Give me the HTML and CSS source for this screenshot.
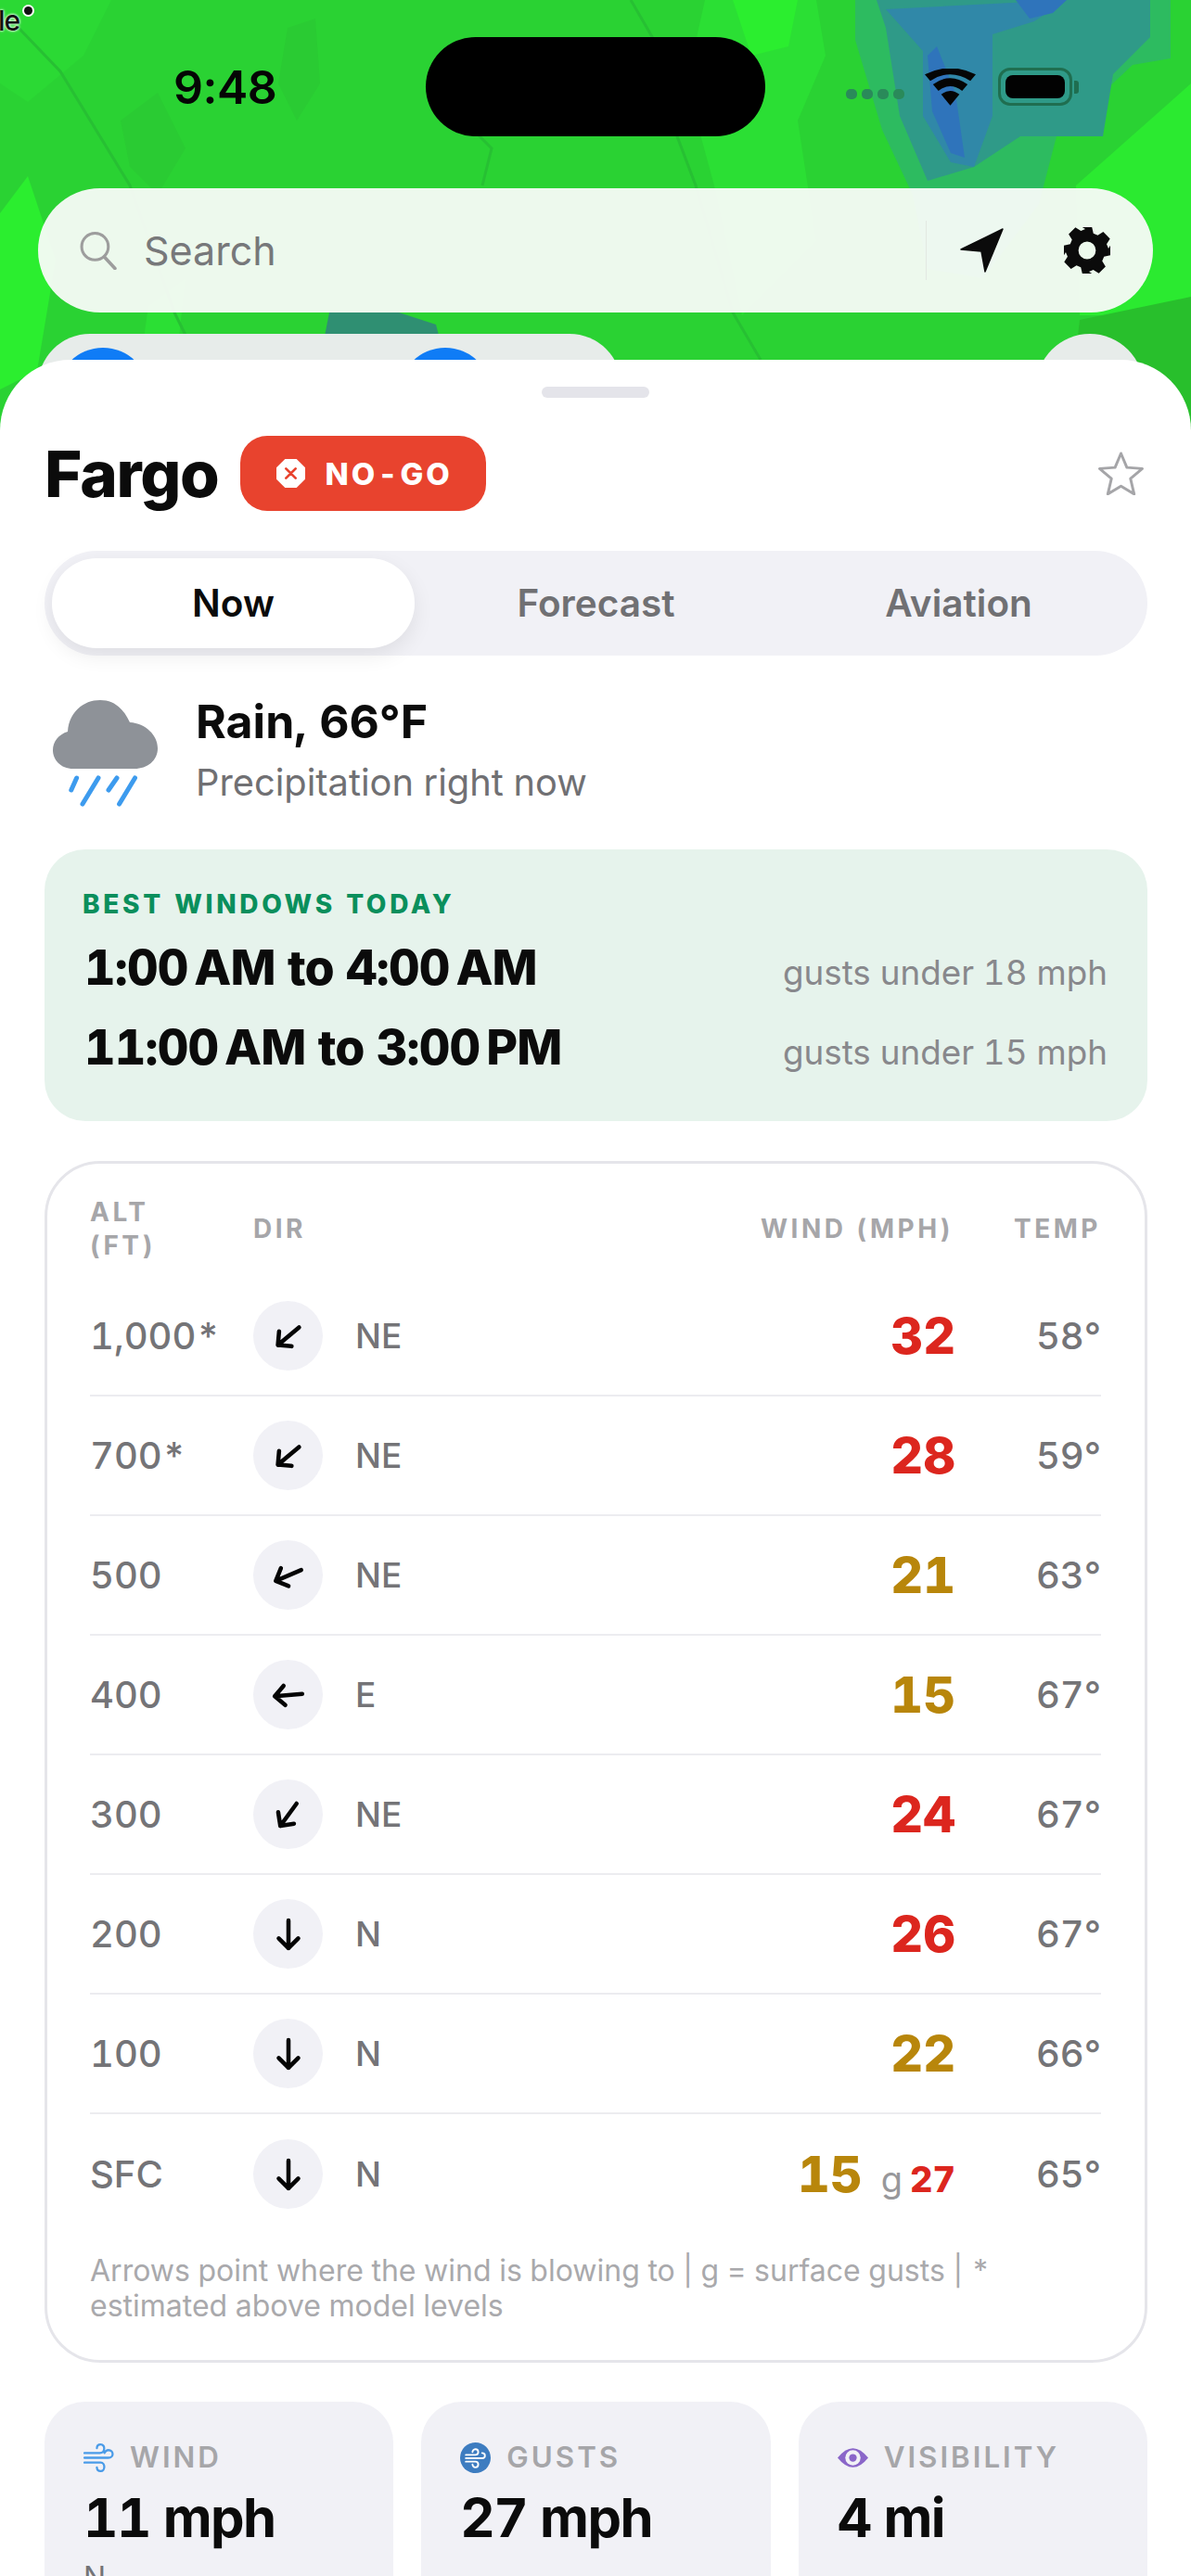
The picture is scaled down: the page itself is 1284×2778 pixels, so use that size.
FILE: index.html
```html
<!DOCTYPE html>
<html lang="en">
<head>
<meta charset="UTF-8"/>
<title>Fargo</title>
<link rel="stylesheet" href="styles.css">
</head>
<body>
<div class="map">
 <svg class="map-art" viewBox="0 0 1284 470">
  <rect width="1284" height="470" fill="#2ad233"/>
  <path d="M0 0H120L90 60 30 110 0 90Z" fill="#2bd934"/>
  <path d="M760 0H880L890 60 860 130 880 260 800 340 770 200 740 90Z" fill="#2bdf34"/>
  <path d="M790 0H860L850 50 810 60Z" fill="#2bee2f"/>
  <path d="M0 230L30 190 60 280 40 400 0 420Z" fill="#2bee2f"/>
  <path d="M130 130L170 100 200 160 170 210 140 180Z" fill="#2acb33"/>
  <path d="M310 30L340 20 345 90 320 130 300 90Z" fill="#2acb33"/>
  <path d="M160 330L200 300 190 390 150 400Z" fill="#2bdf34"/>
  <path d="M1160 200L1284 90V340H1164Z" fill="#2bea30"/>
  <path d="M1164 345L1284 320V470H1150Z" fill="#28bf2c"/>
  <path d="M922 0V43L951 140 984 210 1000 290 1060 300 1120 220 1139 147 1221 70 1262 63V0Z" fill="#2dbb60"/>
  <path d="M945 0L955 30 970 125 1000 195 1050 180 1100 147H1189L1200 80 1240 40V0Z" fill="#2f9a88"/>
  <path d="M955 10L995 55V125L1025 175 1050 180 1070 125V37L1115 23 1150 0Z" fill="#3088a8"/>
  <path d="M1000 60L1010 50 1030 100 1040 170 1025 165 1005 120Z" fill="#2f74bb"/>
  <path d="M1095 0H1150L1135 14 1110 20Z" fill="#2f74bb"/>
  <path d="M355 337L345 388H480L470 350 430 337Z" fill="#2f8f72"/>
  <g fill="none" stroke="#27c033" stroke-width="3">
   <path d="M20 30L65 77 140 200 188 337 213 388"/>
   <path d="M680 0L705 43 730 147 750 200 790 337 820 388"/>
   <path d="M490 120L530 160 520 200"/>
  </g>
 </svg>
 <span class="map-label">le<i class="map-dot"></i></span>

 <div class="status">
  <span class="clock">9:48</span>
  <div class="island"></div>
  <div class="status-right">
   <div class="signal"><i></i><i></i><i></i><i></i></div>
   <svg class="wifi" viewBox="0 0 56 40"><path d="M28 40L18 28Q28 20 38 28Z" fill="#050505"/><path d="M15 24L9 17Q28 3 47 17L41 24Q28 14 15 24Z" fill="#050505"/><path d="M6 13L0 6Q28 -8 56 6L50 13Q28 -1 6 13Z" fill="#050505"/></svg>
   <div class="battery"><div class="battery-fill"></div></div>
   <div class="battery-cap"></div>
  </div>
 </div>

 <div class="search">
  <svg class="search-icon" viewBox="0 0 40 40"><circle cx="17" cy="16" r="14" fill="none" stroke="#9d9d9d" stroke-width="3"/><path d="M27 27L38 39" stroke="#9d9d9d" stroke-width="3.5" stroke-linecap="round"/></svg>
  <span class="search-text">Search</span>
  <div class="search-div"></div>
  <svg class="locate" viewBox="0 0 48 48"><path d="M46 1L27 47 23 25 1 23Z" fill="#0b0b0b" stroke="#0b0b0b" stroke-width="1.5" stroke-linejoin="round"/></svg>
  <svg class="gear" viewBox="0 0 48 48"><path fill="#0b0b0b" fill-rule="evenodd" d="M19 0h10l1.500 6.500 4.500 1.900 5.700-3.500 7 7-3.500 5.700 1.900 4.500L48 19v10l-6.500 1.500-1.900 4.500 3.500 5.700-7 7-5.700-3.500-4.500 1.900L29 48H19l-1.500-6.500-4.500-1.900-5.700 3.500-7-7 3.500-5.700-1.900-4.500L0 29V19l6.500-1.500 1.900-4.500-3.500-5.700 7-7 5.700 3.500 4.500-1.900ZM24 15a9 9 0 1 0 0 18 9 9 0 0 0 0-18Z"/></svg>
 </div>

 <div class="chips">
  <div class="chip-wide"><i class="chip-dot"></i><i class="chip-dot"></i></div>
  <div class="chip-round"></div>
 </div>
</div>

<div class="sheet">
 <div class="handle"></div>

 <div class="title-row">
  <h1 class="city">Fargo</h1>
  <div class="badge">
   <svg class="badge-icon" viewBox="0 0 30 30"><path d="M9 0h12l9 9v12l-9 9H9l-9-9V9Z" fill="#fff"/><path d="M10 10l10 10M20 10L10 20" stroke="#e8432e" stroke-width="2.600" stroke-linecap="round"/></svg>
   NO-GO
  </div>
  <svg class="star" viewBox="0 0 52 48"><path d="M26 2l6.500 15.500 17 1.300-13 11 4 17L26 38l-14.500 8.800 4-17-13-11 17-1.300Z" fill="none" stroke="#a5a5a8" stroke-width="3" stroke-linejoin="round"/></svg>
 </div>

 <div class="tabs">
  <div class="tab tab-on">Now</div>
  <div class="tab">Forecast</div>
  <div class="tab">Aviation</div>
 </div>

 <div class="now">
  <svg class="now-icon" viewBox="0 0 113 113">
   <path d="M22 74C8 74 0 64 0 54 0 45 6 37 16 34 17 14 32 0 51 0 66 0 76 9 83 24 100 25 113 38 113 52 113 65 102 74 88 74Z" fill="#8e9298"/>
   <g stroke="#3d9bee" stroke-width="5" stroke-linecap="round">
    <path d="M25.600 84L19.800 97"/><path d="M49 84L32 112"/><path d="M69 84L60 97"/><path d="M88.500 84L71.600 112"/>
   </g>
  </svg>
  <div>
   <div class="now-title">Rain, 66°F</div>
   <div class="now-sub">Precipitation right now</div>
  </div>
 </div>

 <div class="best">
  <div class="best-label">BEST WINDOWS TODAY</div>
  <div class="best-row"><span class="best-time">1:00&#8239;AM to 4:00&#8239;AM</span><span class="best-note">gusts under 18 mph</span></div>
  <div class="best-row"><span class="best-time">11:00&#8239;AM to 3:00&#8239;PM</span><span class="best-note">gusts under 15 mph</span></div>
 </div>

 <div class="winds">
  <div class="winds-head">
   <span class="head-alt">ALT<br>(FT)</span>
   <span class="head-dir">DIR</span>
   <span class="head-wind">WIND (MPH)</span>
   <span class="head-temp">TEMP</span>
  </div>

  <div class="wind-row">
   <span class="alt">1,000*</span>
   <span class="dir-dot"><svg class="arrow rot-50" viewBox="0 0 24 24"><path d="M12 3.500V20.500M6 14.500l6 6 6-6"/></svg></span>
   <span class="dir-name">NE</span>
   <span class="speed red">32</span>
   <span class="temp">58°</span>
  </div>
  <div class="wind-row">
   <span class="alt">700*</span>
   <span class="dir-dot"><svg class="arrow rot-50" viewBox="0 0 24 24"><path d="M12 3.500V20.500M6 14.500l6 6 6-6"/></svg></span>
   <span class="dir-name">NE</span>
   <span class="speed red">28</span>
   <span class="temp">59°</span>
  </div>
  <div class="wind-row">
   <span class="alt">500</span>
   <span class="dir-dot"><svg class="arrow rot-67" viewBox="0 0 24 24"><path d="M12 3.500V20.500M6 14.500l6 6 6-6"/></svg></span>
   <span class="dir-name">NE</span>
   <span class="speed amber">21</span>
   <span class="temp">63°</span>
  </div>
  <div class="wind-row">
   <span class="alt">400</span>
   <span class="dir-dot"><svg class="arrow rot-85" viewBox="0 0 24 24"><path d="M12 3.500V20.500M6 14.500l6 6 6-6"/></svg></span>
   <span class="dir-name">E</span>
   <span class="speed amber">15</span>
   <span class="temp">67°</span>
  </div>
  <div class="wind-row">
   <span class="alt">300</span>
   <span class="dir-dot"><svg class="arrow rot-36" viewBox="0 0 24 24"><path d="M12 3.500V20.500M6 14.500l6 6 6-6"/></svg></span>
   <span class="dir-name">NE</span>
   <span class="speed red">24</span>
   <span class="temp">67°</span>
  </div>
  <div class="wind-row">
   <span class="alt">200</span>
   <span class="dir-dot"><svg class="arrow" viewBox="0 0 24 24"><path d="M12 3.500V20.500M6 14.500l6 6 6-6"/></svg></span>
   <span class="dir-name">N</span>
   <span class="speed red">26</span>
   <span class="temp">67°</span>
  </div>
  <div class="wind-row">
   <span class="alt">100</span>
   <span class="dir-dot"><svg class="arrow" viewBox="0 0 24 24"><path d="M12 3.500V20.500M6 14.500l6 6 6-6"/></svg></span>
   <span class="dir-name">N</span>
   <span class="speed amber">22</span>
   <span class="temp">66°</span>
  </div>
  <div class="wind-row wind-row-last">
   <span class="alt">SFC</span>
   <span class="dir-dot"><svg class="arrow" viewBox="0 0 24 24"><path d="M12 3.500V20.500M6 14.500l6 6 6-6"/></svg></span>
   <span class="dir-name">N</span>
   <span class="speed amber">15<span class="gust-g">g</span><span class="gust-val">27</span></span>
   <span class="temp">65°</span>
  </div>

  <p class="winds-note">Arrows point where the wind is blowing to | g = surface gusts | * estimated above model levels</p>
 </div>

 <div class="stats">
  <div class="stat">
   <div class="stat-label">
    <svg class="stat-icon" viewBox="0 0 32 32"><path d="M1 11H17C23 11 23 2 18 2 15 2 14 4 14 6M1 16H26C32 16 32 8 26 8 24 8 23 9 22 11M1 21H18C23 21 23 30 18 30 15 30 14 28 14 26" fill="none" stroke="#4a9be8" stroke-width="2.200" stroke-linecap="round"/></svg>
    WIND
   </div>
   <div class="stat-value">11 mph</div>
   <div class="stat-sub">N</div>
  </div>
  <div class="stat">
   <div class="stat-label">
    <svg class="stat-icon" viewBox="0 0 32 32"><circle cx="16" cy="16" r="16" fill="#3d7cc0"/><path d="M6 13H16C20 13 20 7 16 7 14 7 13 9 13 10M6 16.500H23C27 16.500 27 11 23 11M6 20H16C20 20 20 26 16 26 14 26 13 24 13 23" fill="none" stroke="#fff" stroke-width="1.800" stroke-linecap="round"/></svg>
    GUSTS
   </div>
   <div class="stat-value">27 mph</div>
  </div>
  <div class="stat">
   <div class="stat-label">
    <svg class="stat-icon" viewBox="0 0 32 32"><path d="M0 16Q16 -4 32 16 16 36 0 16Z" fill="#8a66c9"/><circle cx="16" cy="16" r="8" fill="#f1f1f6"/><circle cx="16" cy="16" r="4" fill="#8a66c9"/></svg>
    VISIBILITY
   </div>
   <div class="stat-value">4 mi</div>
  </div>
 </div>
</div>
</body>
</html>
```

FILE: styles.css
```css
* {
 box-sizing: border-box;
}
html, body {
 margin: 0;
 height: 2778px;
 overflow: hidden;
 background: #fff;
 font-family: Inter, "Liberation Sans", sans-serif;
 font-variant-numeric: tabular-nums;
}

/* map and everything floating on it */
.map {
 position: relative;
 height: 470px;
 padding: 40px 41px 0;
 overflow: hidden;
 background: #2ad233;
}
.map-art {
 position: absolute;
 left: 0;
 top: 0;
 width: 1284px;
 height: 470px;
}
.map-label {
 position: absolute;
 left: -2px;
 top: 4px;
 font-size: 30px;
 font-weight: 500;
 letter-spacing: -1px;
 color: #111;
 text-shadow: 0 0 3px #fff, 0 0 3px #fff;
}
.map-dot {
 position: absolute;
 left: 28px;
 top: 3px;
 width: 9px;
 height: 9px;
 border-radius: 50%;
 background: #111;
 box-shadow: 0 0 0 2px #fff;
}
.status {
 position: relative;
 display: flex;
 align-items: center;
 height: 107px;
}
.clock {
 margin-left: 146px;
 width: 272px;
 font-size: 50px;
 font-weight: 600;
 font-variant-numeric: normal;
 letter-spacing: -0.500px;
 color: #050505;
}
.island {
 width: 366px;
 height: 107px;
 border-radius: 54px;
 background: #000;
}
.status-right {
 display: flex;
 align-items: center;
 margin-left: 87px;
}
.signal {
 display: flex;
 gap: 5px;
 margin-top: 16px;
}
.signal i {
 width: 12px;
 height: 11px;
 border-radius: 5px;
 background: #2a8a5a;
}
.wifi {
 width: 55px;
 height: 40px;
 margin-left: 22px;
}
.battery {
 width: 80px;
 height: 41px;
 margin-left: 24px;
 padding: 5px;
 border: 3px solid #1f6e50;
 border-radius: 13px;
}
.battery-fill {
 height: 100%;
 border-radius: 8px;
 background: #020202;
}
.battery-cap {
 width: 5px;
 height: 14px;
 margin-left: 2px;
 border-radius: 0 3px 3px 0;
 background: #1f6e50;
}
.search {
 position: relative;
 display: flex;
 align-items: center;
 height: 134px;
 margin-top: 56px;
 padding: 0 46px 0 44px;
 border-radius: 67px;
 background: rgba(248, 251, 248, 0.95);
}
.search-icon {
 width: 41px;
 height: 42px;
}
.search-text {
 margin-left: 29px;
 flex: 1;
 font-size: 43px;
 color: #77787a;
}
.search-div {
 width: 1px;
 height: 64px;
 background: #e2e8e2;
}
.locate {
 width: 48px;
 height: 48px;
 margin-left: 36px;
}
.gear {
 width: 50px;
 height: 50px;
 margin-left: 64px;
}
.chips {
 position: relative;
 display: flex;
 justify-content: space-between;
 margin-top: 23px;
}
.chip-wide {
 display: flex;
 gap: 269px;
 width: 629px;
 height: 120px;
 padding: 15px 0 0 20px;
 border-radius: 56px;
 background: #e7ecea;
}
.chip-dot {
 width: 100px;
 height: 100px;
 border-radius: 50%;
 background: #0f7cf6;
}
.chip-round {
 width: 116px;
 height: 116px;
 margin-right: 10px;
 border-radius: 50%;
 background: #e7ecea;
}

/* bottom sheet */
.sheet {
 position: relative;
 margin-top: -82px;
 height: 2390px;
 padding: 0 47px 0 48px;
 border-radius: 76px 76px 0 0;
 background: #fff;
}
.handle {
 position: absolute;
 left: 584px;
 top: 29px;
 width: 116px;
 height: 12px;
 border-radius: 6px;
 background: #e4e4ea;
}
.title-row {
 display: flex;
 align-items: center;
 padding-top: 82px;
 height: 163px;
}
.city {
 margin: 0;
 font-size: 69px;
 font-weight: 800;
 letter-spacing: -1.300px;
 color: #0b0b0b;
}
.badge {
 display: flex;
 align-items: center;
 gap: 21px;
 height: 81px;
 margin-left: 24px;
 padding: 0 36px 0 39px;
 border-radius: 29px;
 background: #e8432e;
 color: #fff;
 font-size: 33px;
 font-weight: 800;
 letter-spacing: 3px;
}
.badge-icon {
 width: 31px;
 height: 31px;
}
.star {
 width: 51px;
 height: 47px;
 margin: 0 3px 0 auto;
}
.tabs {
 display: grid;
 grid-template-columns: repeat(3, 1fr);
 height: 113px;
 margin-top: 43px;
 padding: 8px;
 border-radius: 57px;
 background: #f1f1f6;
}
.tab {
 display: flex;
 align-items: center;
 justify-content: center;
 font-size: 40.500px;
 font-weight: 600;
 color: #707073;
}
.tab-on {
 border-radius: 48px;
 background: #fff;
 color: #0b0b0b;
 box-shadow: 0 8px 22px rgba(0, 0, 0, 0.08);
}
.now {
 display: flex;
 align-items: flex-start;
 gap: 41px;
 margin-top: 46px;
 padding-left: 9px;
}
.now-icon {
 width: 113px;
 height: 113px;
 margin-top: 2px;
 overflow: visible;
}
.now-title {
 font-size: 50px;
 font-weight: 700;
 line-height: 50px;
 color: #0b0b0b;
}
.now-sub {
 margin-top: 16px;
 margin-bottom: -1px;
 font-size: 39.800px;
 line-height: 50px;
 color: #707073;
}
.best {
 height: 293px;
 margin-top: 48px;
 padding: 43px 43px 0 41px;
 border-radius: 44px;
 background: #e6f3ec;
}
.best-label {
 margin-bottom: 10px;
 font-size: 28px;
 font-weight: 800;
 line-height: 32px;
 letter-spacing: 3.700px;
 color: #0a8f5c;
}
.best-row {
 display: flex;
 justify-content: space-between;
 align-items: baseline;
 height: 86px;
 line-height: 86px;
 padding-left: 2px;
}
.best-time {
 font-size: 52px;
 font-weight: 800;
 letter-spacing: -0.800px;
 color: #0b0b0b;
}
.best-note {
 font-size: 36.800px;
 color: #88888c;
}
.winds {
 height: 1296px;
 margin-top: 43px;
 padding: 0 47px 0 46px;
 border: 3px solid #e5e5ea;
 border-radius: 60px;
}
.winds-head {
 display: grid;
 grid-template-columns: 176px 1fr auto 159px;
 align-items: center;
 height: 122px;
 padding-top: 18px;
 font-size: 28px;
 font-weight: 700;
 line-height: 36px;
 letter-spacing: 3.500px;
 color: #a6a6a9;
}
.head-wind, .head-temp {
 text-align: right;
}
.wind-row {
 display: grid;
 grid-template-columns: 176px 75px 1fr auto 157px;
 align-items: center;
 height: 129px;
 border-bottom: 2px solid #ececf0;
}
.wind-row-last {
 border-bottom: 0;
}
.alt {
 font-size: 40px;
 font-weight: 500;
 color: #747477;
}
.dir-dot {
 display: flex;
 align-items: center;
 justify-content: center;
 width: 75px;
 height: 75px;
 border-radius: 50%;
 background: #f1f1f6;
}
.arrow {
 width: 42px;
 height: 42px;
 fill: none;
 stroke: #050505;
 stroke-width: 2.600;
 stroke-linecap: round;
 stroke-linejoin: round;
}
.rot-36 { transform: rotate(36deg); }
.rot-50 { transform: rotate(50deg); }
.rot-67 { transform: rotate(67deg); }
.rot-85 { transform: rotate(85deg); }
.dir-name {
 padding-left: 35px;
 font-size: 37px;
 font-weight: 500;
 color: #747477;
}
.speed {
 font-size: 54px;
 font-weight: 800;
 text-align: right;
}
.red { color: #dc261e; }
.amber { color: #b8860b; }
.gust-g {
 margin-left: 20px;
 font-size: 38px;
 font-weight: 400;
 color: #98989b;
}
.gust-val {
 margin-left: 8px;
 font-size: 38px;
 color: #dc261e;
}
.temp {
 font-size: 40px;
 font-weight: 500;
 text-align: right;
 color: #747477;
}
.winds-note {
 margin: 21px 0 0;
 font-size: 32px;
 line-height: 38px;
 color: #a9a9ac;
}
.stats {
 display: grid;
 grid-template-columns: repeat(3, 1fr);
 gap: 30px;
 margin-top: 42px;
}
.stat {
 height: 300px;
 padding: 42px 30px 0 42px;
 border-radius: 44px;
 background: #f1f1f6;
}
.stat-label {
 display: flex;
 align-items: center;
 gap: 17px;
 font-size: 31.300px;
 font-weight: 600;
 line-height: 36px;
 letter-spacing: 3px;
 color: #a6a6a9;
}
.stat-icon {
 width: 33px;
 height: 33px;
}
.stat-value {
 margin-top: 12px;
 font-size: 58px;
 font-weight: 700;
 letter-spacing: -1.600px;
 color: #0b0b0b;
}
.stat-sub {
 margin-top: 10px;
 font-size: 32px;
 color: #747477;
}
```
